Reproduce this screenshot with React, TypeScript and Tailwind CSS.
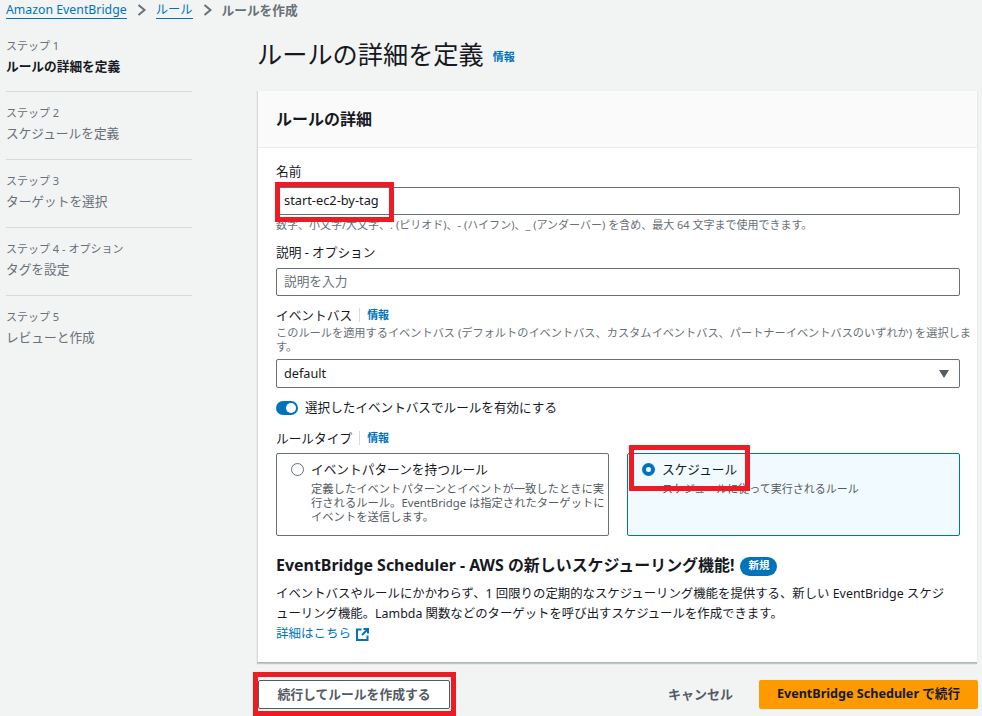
import React from "react";

const font = { fontFamily: '"Noto Sans", "Noto Sans CJK JP", sans-serif' };

function Step({ n, label, active, last, first }: { n: string; label: string; active?: boolean; last?: boolean; first?: boolean }) {
  return (
    <div className={`${first ? "h-[54px]" : "h-[68px] pt-[13px]"} ${last ? "" : "border-b border-[#d5dbdb]"}`}>
      <div className="text-[11px] leading-[16px] text-[#687078]">{n}</div>
      <div className={`text-[12.7px] leading-[24px] ${active ? "font-bold text-[#16191f]" : "text-[#687078]"}`}>{label}</div>
    </div>
  );
}

function Info() {
  return <span className="text-[11px] font-bold text-[#0073bb] leading-[16px]">情報</span>;
}

function App() {
  return (
    <div className="relative w-[982px] h-[716px] overflow-hidden bg-[#f2f3f3] text-[#16191f]" style={font}>
      {/* breadcrumb */}
      <div className="flex items-center h-[20px] pl-[6px] text-[12.3px] leading-[20px]">
        <span className="text-[#0073bb] border-b border-[#0073bb] leading-[17px]">Amazon EventBridge</span>
        <svg className="mx-[8px]" width="13" height="14" viewBox="0 0 12 14"><path d="M3 2l6 5-6 5" fill="none" stroke="#687078" strokeWidth="2" /></svg>
        <span className="text-[#0073bb] border-b border-[#0073bb] leading-[17px]">ルール</span>
        <svg className="mx-[8px]" width="13" height="14" viewBox="0 0 12 14"><path d="M3 2l6 5-6 5" fill="none" stroke="#687078" strokeWidth="2" /></svg>
        <span className="text-[#687078] font-bold text-[12.7px]">ルールを作成</span>
      </div>

      <div className="flex mt-[18px]">
        {/* sidebar */}
        <div className="w-[186px] ml-[6px] shrink-0">
          <Step first n="ステップ 1" label="ルールの詳細を定義" active />
          <Step n="ステップ 2" label="スケジュールを定義" />
          <Step n="ステップ 3" label="ターゲットを選択" />
          <Step n="ステップ 4 - オプション" label="タグを設定" />
          <Step n="ステップ 5" label="レビューと作成" last />
        </div>

        {/* main */}
        <div className="ml-[65px] w-[722px] -mt-[1px]">
          <div className="flex items-end h-[54px] pb-[21px]">
            <span className="text-[25.2px] leading-[32px] text-[#16191f]">ルールの詳細を定義</span>
            <span className="ml-[9px] mb-[3px]"><Info /></span>
          </div>

          <div className="bg-white w-[720px] h-[572px] border-l border-[#d5dbdb] border-b border-b-[#aab7b8] shadow-[0_1px_1px_rgba(0,28,36,0.2)]">
            <div className="h-[57px] bg-[#fafafa] border-b border-[#eaeded] flex items-center pl-[18px]">
              <span className="text-[16px] font-bold">ルールの詳細</span>
            </div>
            <div className="pl-[18px] pr-[17px] pt-[13px] w-[719px]">
              <div className="text-[12.7px] leading-[20px]">名前</div>
              <div className="mt-[6px] h-[28px] border border-[#687078] rounded-[2px] flex items-center pl-[7px] text-[12.8px]">start-ec2-by-tag</div>
              <div className="text-[11px] leading-[16px] mt-[2px] text-[#687078]">数字、小文字/大文字、. (ピリオド)、- (ハイフン)、_ (アンダーバー) を含め、最大 64 文字まで使用できます。</div>

              <div className="text-[12.7px] leading-[20px] mt-[9px]">説明 - オプション</div>
              <div className="mt-[6px] h-[28px] border border-[#687078] rounded-[2px] flex items-center pl-[7px] text-[12.7px] text-[#687078]">説明を入力</div>

              <div className="flex items-center mt-[9px] h-[20px]">
                <span className="text-[12.7px] leading-[20px]">イベントバス</span>
                <span className="w-px h-[14px] bg-[#d5dbdb] ml-[7px] mr-[7px]" />
                <Info />
              </div>
              <div className="text-[11.2px] leading-[14px] text-[#687078] mt-[1px] whitespace-nowrap">このルールを適用するイベントバス (デフォルトのイベントバス、カスタムイベントバス、パートナーイベントバスのいずれか) を選択しま<br />す。</div>
              <div className="mt-[5px] h-[29px] border border-[#687078] rounded-[2px] flex items-center justify-between pl-[7px] pr-[10px] text-[12.7px]">
                <span>default</span>
                <svg width="10" height="8" viewBox="0 0 10 8"><path d="M0 0h10L5 8z" fill="#545b64" /></svg>
              </div>

              <div className="flex items-center mt-[10px] h-[20px]">
                <span className="w-[22px] h-[14px] rounded-full bg-[#0073bb] flex items-center justify-end pr-[2px]">
                  <span className="w-[10px] h-[10px] rounded-full bg-white" />
                </span>
                <span className="ml-[7px] text-[12.6px]">選択したイベントバスでルールを有効にする</span>
              </div>

              <div className="flex items-center mt-[10px] h-[20px]">
                <span className="text-[12.7px] leading-[20px]">ルールタイプ</span>
                <span className="w-px h-[14px] bg-[#d5dbdb] ml-[7px] mr-[7px]" />
                <Info />
              </div>

              <div className="grid grid-cols-[333px_333px] gap-x-[18px] mt-[5px]">
                <div className="h-[83px] border border-[#687078] rounded-[2px] flex pl-[14px] pt-[6px]">
                  <span className="w-[13px] h-[13px] mt-[3px] rounded-full border border-[#687078] shrink-0" />
                  <div className="ml-[7px] pr-[2px]">
                    <div className="text-[12.7px] leading-[18px]">イベントパターンを持つルール</div>
                    <div className="text-[11.3px] leading-[14px] text-[#545b64] mt-[4px]">定義したイベントパターンとイベントが一致したときに実行されるルール。EventBridge は指定されたターゲットにイベントを送信します。</div>
                  </div>
                </div>
                <div className="h-[83px] border border-[#0073bb] rounded-[2px] bg-[#f1faff] flex pl-[14px] pt-[6px]">
                  <span className="w-[13px] h-[13px] mt-[3px] rounded-full border-[4px] border-[#0073bb] bg-white shrink-0" />
                  <div className="ml-[7px]">
                    <div className="text-[12.7px] leading-[18px]">スケジュール</div>
                    <div className="text-[11px] leading-[14px] text-[#545b64] mt-[4px]">スケジュールに従って実行されるルール</div>
                  </div>
                </div>
              </div>

              <div className="flex items-center mt-[18px] h-[24px]">
                <span className="text-[15.95px] font-bold whitespace-nowrap">EventBridge Scheduler - AWS の新しいスケジューリング機能!</span>
                <span className="ml-[6px] px-[8px] h-[19px] rounded-full bg-[#0073bb] text-white text-[10.5px] font-bold flex items-center">新規</span>
              </div>
              <div className="text-[12.4px] leading-[20px] mt-[6px]">イベントバスやルールにかかわらず、1 回限りの定期的なスケジューリング機能を提供する、新しい EventBridge スケジ<br />ューリング機能。Lambda 関数などのターゲットを呼び出すスケジュールを作成できます。</div>
              <div className="flex items-center text-[12.5px] leading-[20px] text-[#0073bb]">
                <span>詳細はこちら</span>
                <svg className="ml-[5px]" width="13" height="13" viewBox="0 0 13 13" fill="none" stroke="#0073bb" strokeWidth="2"><path d="M5.5 1.5H1v10.5h10.5V7.5" /><path d="M7.5 1h4.5v4.5" /><path d="M12 1L6 7" /></svg>
              </div>
            </div>
          </div>

          {/* footer */}
          <div className="flex items-center mt-[17px] w-[721px]">
            <button className="ml-[1px] w-[192px] h-[29px] bg-white border border-[#545b64] rounded-[2px] text-[12.8px] font-bold text-[#545b64]">続行してルールを作成する</button>
            <span className="ml-auto text-[13px] font-bold text-[#545b64]">キャンセル</span>
            <button className="ml-[26px] w-[219px] h-[29px] bg-[#ff9900] rounded-[2px] text-[12.6px] font-bold text-[#16191f]">EventBridge Scheduler で続行</button>
          </div>
        </div>
      </div>

      {/* red annotation frames */}
      <div className="absolute left-[275px] top-[182px] w-[119px] h-[40px] border-[5px] border-[#ed1c24]" />
      <div className="absolute left-[629px] top-[445px] w-[121px] h-[46px] border-[5px] border-[#ed1c24]" />
      <div className="absolute left-[253px] top-[672px] w-[203px] h-[44px] border-[5px] border-[#ed1c24]" />
    </div>
  );
}

export default App;
